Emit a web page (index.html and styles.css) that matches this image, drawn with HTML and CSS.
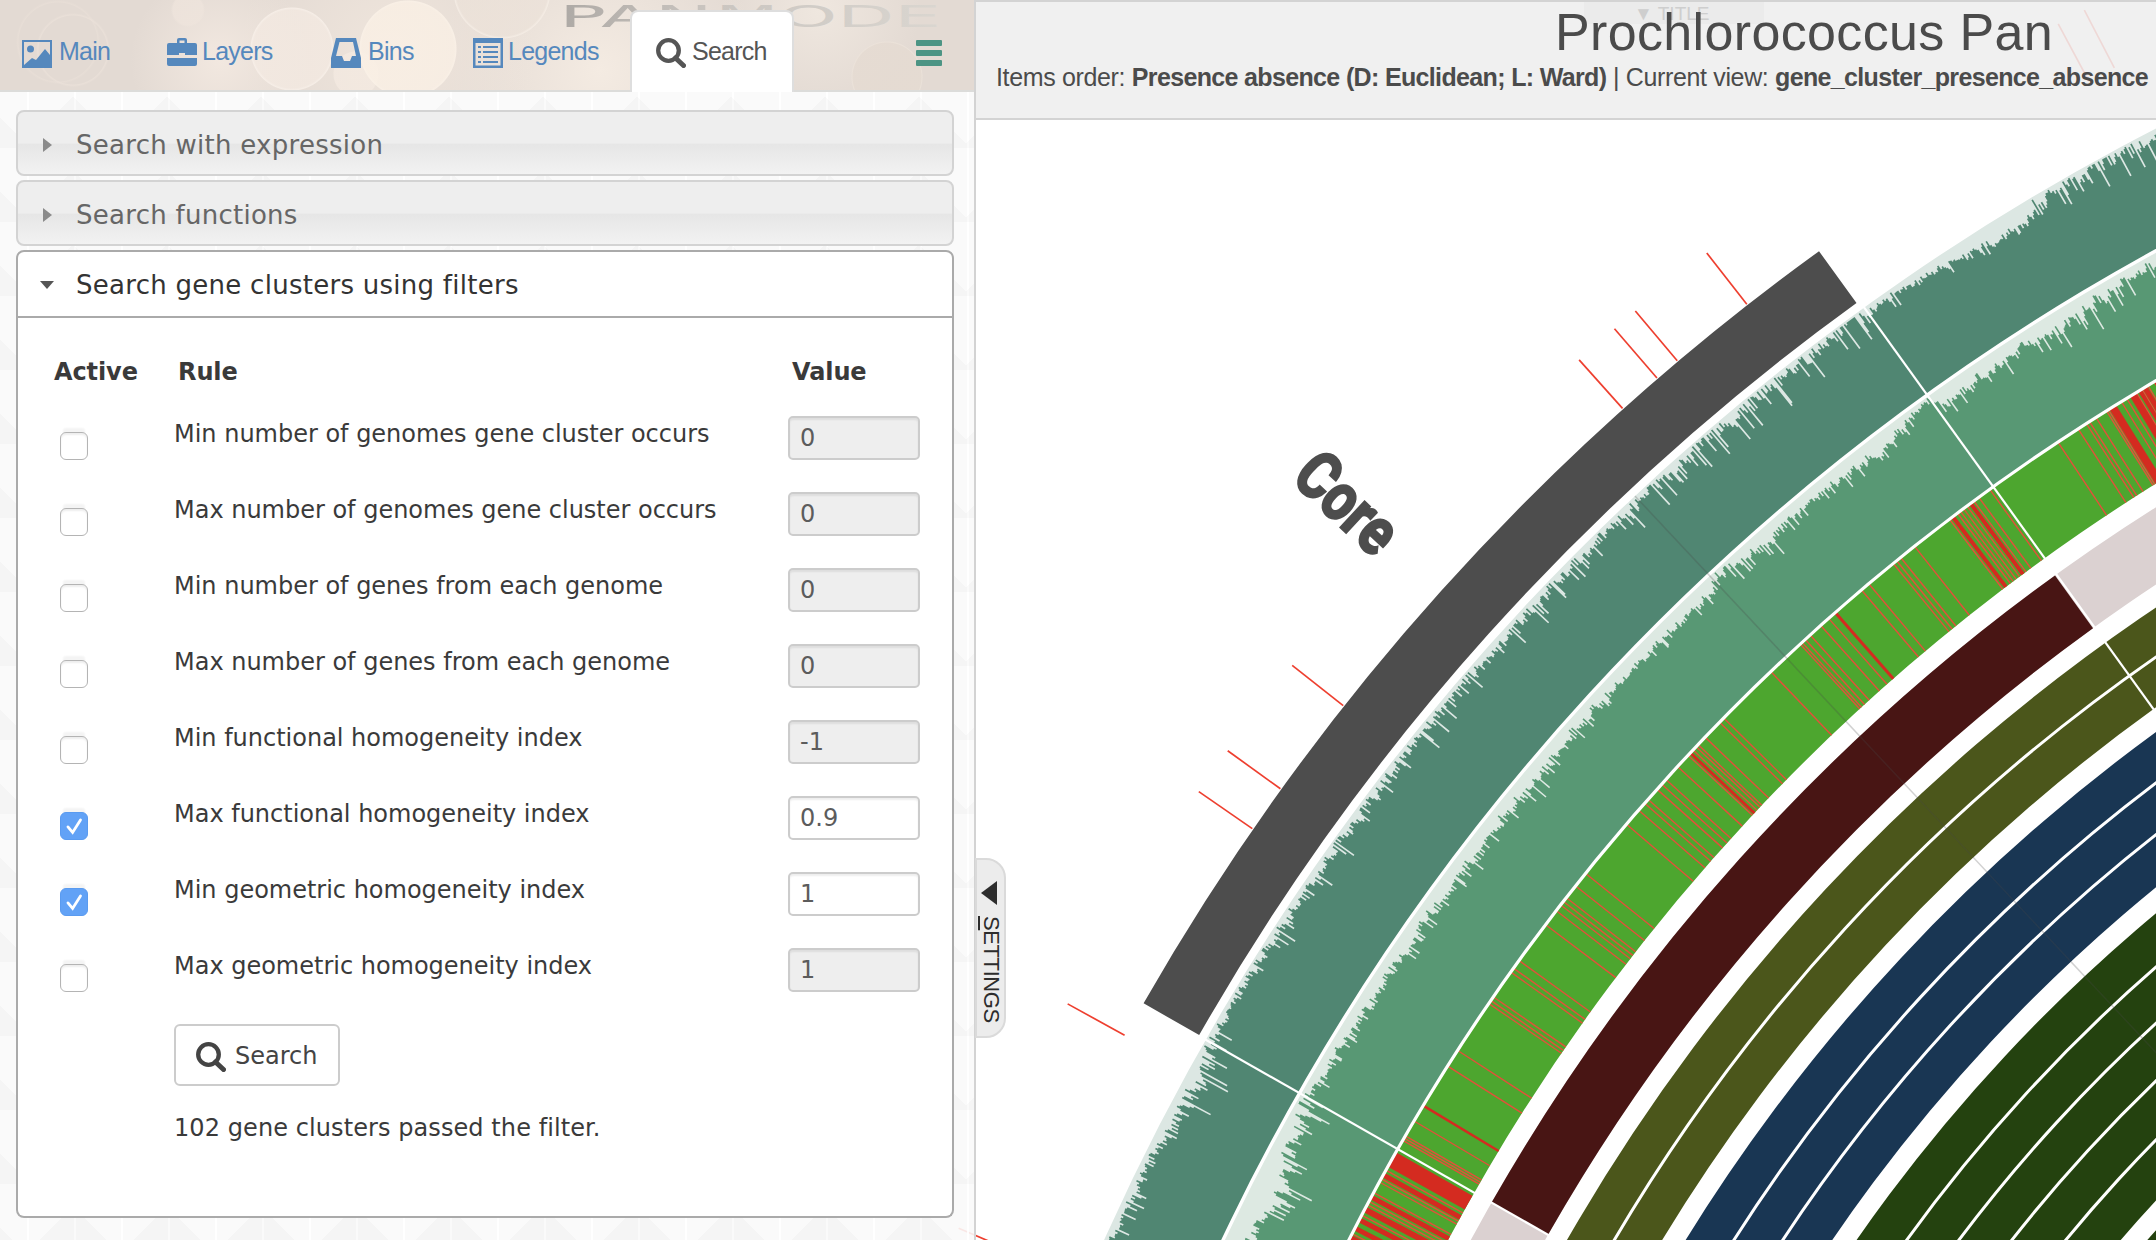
FILE: index.html
```html
<!DOCTYPE html>
<html lang="en">
<head>
<meta charset="utf-8">
<title>Prochlorococcus Pan</title>
<link rel="stylesheet" href="styles.css">
</head>
<body>
<svg id="stage" class="stage" viewBox="0 0 2156 1240" width="2156" height="1240"></svg>

<aside class="panel">
  <nav class="tabs">
    <svg class="mode" width="400" height="36" viewBox="0 0 400 36">
      <defs><linearGradient id="fade" gradientUnits="userSpaceOnUse" x1="0" x2="400" y1="0" y2="0"><stop offset="0" stop-color="#aaa6a2"/><stop offset=".4" stop-color="#c9c4bf"/><stop offset="1" stop-color="#dad6d0"/></linearGradient></defs>
      <text x="16" y="27" textLength="154" lengthAdjust="spacingAndGlyphs" fill="url(#fade)">PAN</text>
      <text x="172" y="27" textLength="226" lengthAdjust="spacingAndGlyphs" fill="url(#fade)">MODE</text>
    </svg>
    <a class="tab tab-main"><svg class="icon" viewBox="0 0 30 30"><path fill-rule="evenodd" d="M0 2h30v28H0zM2 4v23l8-7 4 2 9-11 5 6V4z"/><circle cx="8.500" cy="11" r="3.500"/></svg><span>Main</span></a>
    <a class="tab tab-layers"><svg class="icon" viewBox="0 0 30 30"><path d="M10 5V2q0-2 2-2h6q2 0 2 2v3h8q2 0 2 2v10H18v-2h-6v2H0V7q0-2 2-2zM12.500 5h5V2.500h-5zM0 20h30v6q0 2-2 2H2q-2 0-2-2z" fill-rule="evenodd"/></svg><span>Layers</span></a>
    <a class="tab tab-bins"><svg class="icon" viewBox="0 0 30 30"><path fill-rule="evenodd" d="M5 0h20l5 20v10H0V20zM8.500 4L5 18h6l2 5h6l2-5h4L22 4z"/></svg><span>Bins</span></a>
    <a class="tab tab-legends"><svg class="icon" viewBox="0 0 30 30"><path fill-rule="evenodd" d="M0 0h30v30H0zM2.500 5v22.500h25V5z"/><path d="M5 8h3v2H5zm5 0h15v2H10zM5 13h3v2H5zm5 0h15v2H10zM5 18h3v2H5zm5 0h15v2H10zM5 23h3v2H5zm5 0h15v2H10z"/></svg><span>Legends</span></a>
    <a class="tab tab-search active"><svg class="icon" viewBox="0 0 30 30"><circle cx="12.500" cy="12.500" r="10.300" fill="none" stroke="currentColor" stroke-width="4.300"/><path d="M19.500 20l8 7.500" stroke="currentColor" stroke-width="5" stroke-linecap="round"/></svg><span>Search</span></a>
    <div class="burger"><i></i><i></i><i></i></div>
  </nav>

  <div class="accordion">
    <h3 class="head"><svg class="caret" viewBox="0 0 16 16"><path d="M4 1l9 7-9 7z"/></svg>Search with expression</h3>
    <h3 class="head"><svg class="caret" viewBox="0 0 16 16"><path d="M4 1l9 7-9 7z"/></svg>Search functions</h3>
    <h3 class="head open"><svg class="caret" viewBox="0 0 16 16"><path d="M1 4h14l-7 8z"/></svg>Search gene clusters using filters</h3>
    <section class="content">
      <div class="row titles"><b>Active</b><b>Rule</b><b>Value</b></div>
      <div class="row"><input type="checkbox" class="check"><label>Min number of genomes gene cluster occurs</label><input class="value" value="0" disabled></div>
      <div class="row"><input type="checkbox" class="check"><label>Max number of genomes gene cluster occurs</label><input class="value" value="0" disabled></div>
      <div class="row"><input type="checkbox" class="check"><label>Min number of genes from each genome</label><input class="value" value="0" disabled></div>
      <div class="row"><input type="checkbox" class="check"><label>Max number of genes from each genome</label><input class="value" value="0" disabled></div>
      <div class="row"><input type="checkbox" class="check"><label>Min functional homogeneity index</label><input class="value" value="-1" disabled></div>
      <div class="row"><span class="check on"><svg viewBox="0 0 28 28"><path d="M7.500 15l5 6L21 7.500"/></svg></span><label>Max functional homogeneity index</label><input class="value" value="0.9"></div>
      <div class="row"><span class="check on"><svg viewBox="0 0 28 28"><path d="M7.500 15l5 6L21 7.500"/></svg></span><label>Min geometric homogeneity index</label><input class="value" value="1"></div>
      <div class="row"><input type="checkbox" class="check"><label>Max geometric homogeneity index</label><input class="value" value="1" disabled></div>
      <button class="go"><svg class="icon" viewBox="0 0 30 30"><circle cx="12.500" cy="12.500" r="10.300" fill="none" stroke="currentColor" stroke-width="4.300"/><path d="M19.500 20l8 7.500" stroke="currentColor" stroke-width="5" stroke-linecap="round"/></svg><span>Search</span></button>
      <p class="result">102 gene clusters passed the filter.</p>
    </section>
  </div>
</aside>

<main class="view">
  <header class="title">
    <span class="title-tab">▼ TITLE</span>
    <h1>Prochlorococcus Pan</h1>
    <p><span>Items order: </span><b>Presence absence (D: Euclidean; L: Ward)</b><span> | Current view: </span><b>gene_cluster_presence_absence</b></p>
  </header>
  <div class="settings"><svg width="17" height="24" viewBox="0 0 17 24"><path d="M0 12L16 0v24z" fill="#2d2d2d"/></svg><span><u>S</u>ETTINGS</span></div>
</main>
<script src="chart.js"></script>
</body>
</html>
```
FILE: styles.css
```css
* { box-sizing: border-box; }
body { margin: 0; width: 2156px; height: 1240px; display: flex; overflow: hidden; background: #fff; font-family: "Liberation Sans", Arial, sans-serif; position: relative; }
.stage { position: absolute; left: 0; top: 0; }

.panel {
  position: relative; width: 976px; height: 1240px; border-right: 2px solid #d3d3d3;
  background:
    conic-gradient(from 135deg at 50% 30%, rgba(0,0,0,.018) 90deg, transparent 0) 26px 0 / 94px 74px,
    linear-gradient(90deg, rgba(255,255,255,.9) 2px, transparent 2px) 27px 0 / 47px 100%,
    rgba(250,250,250,.9);
}
.tabs {
  position: relative; height: 92px; display: flex; align-items: flex-end; border-bottom: 2px solid #dcdcda; color: #5588bd;
  background:
    radial-gradient(circle at 292px 49px, rgba(244,234,226,.75) 39px, rgba(248,240,233,.85) 41px, transparent 42px),
    radial-gradient(circle at 408px 49px, rgba(250,240,229,.8) 46px, rgba(250,241,231,.9) 48px, transparent 49px),
    radial-gradient(circle at 188px 10px, rgba(238,228,220,.8) 15px, transparent 17px),
    radial-gradient(circle at 356px 74px, rgba(245,235,226,.7) 22px, transparent 23px),
    radial-gradient(circle at 73px 50px, transparent 34px, rgba(236,226,218,.7) 35px, transparent 37px),
    radial-gradient(circle at 58px 42px, transparent 39px, rgba(234,224,216,.6) 40px, transparent 42px),
    radial-gradient(circle at 502px -10px, rgba(236,226,217,.7) 46px, rgba(246,238,230,.8) 48px, transparent 49px),
    radial-gradient(circle at 887px 77px, rgba(229,219,210,.9) 34px, rgba(236,227,218,.8) 35px, transparent 36px),
    radial-gradient(circle at 220px 60px, #f2e8e0, transparent 90px),
    radial-gradient(circle at 390px 50px, #efe5dc, transparent 150px),
    radial-gradient(circle at 600px 70px, #f4ebe2, transparent 160px),
    radial-gradient(circle at 820px 10px, #efe7df, transparent 100px),
    #e3dad3;
}
.mode { position: absolute; left: 543px; top: 0; font: 30px "DejaVu Sans", sans-serif; }
.tab { display: flex; gap: 7px; height: 80px; padding-top: 28px; font-size: 25px; letter-spacing: -0.75px; white-space: nowrap; position: relative; }
.tab span { line-height: 27px; }
.icon { width: 30px; height: 30px; fill: currentColor; flex: none; }
.tab-main { margin-left: 22px; width: 145px; }
.tab-layers { width: 164px; }
.tab-bins { width: 142px; }
.tab-legends { width: 157px; }
.tab-layers .icon, .tab-legends .icon { margin-right: -2px; }
.tab.active { height: 82px; width: 164px; margin-bottom: -2px; padding-top: 26px; padding-left: 24px; background: #fff; border: 2px solid #dedede; border-bottom: 0; border-radius: 8px 8px 0 0; color: #555; }
.active .icon { margin-right: -1px; }
.burger { margin: 0 0 24px 122px; width: 26px; display: flex; flex-direction: column; gap: 4px; }
.burger i { height: 6px; background: #4c9484; border-radius: 1px; }

.accordion { padding: 18px 20px 0 16px; font-family: "DejaVu Sans", Verdana, sans-serif; color: #3a3a3a; }
.head { margin: 0 0 4px; height: 66px; padding: 3px 0 0 21px; display: flex; align-items: center; gap: 21px; font-size: 26px; font-weight: 400; letter-spacing: 0.27px; color: #666; border: 2px solid #d3d3d3; border-radius: 8px; background: linear-gradient(#eee 0 50%, #e6e6e6 52%, #f2f2f2); }
.head .caret { width: 16px; height: 16px; fill: #8b8b8b; }
.head.open { height: 68px; margin: 0; padding-top: 2px; background: #fff; border-color: #aaa; border-radius: 8px 8px 0 0; color: #333; }
.head.open .caret { fill: #555; }
.content { height: 900px; background: #fff; border: 2px solid #aaa; border-top: 0; border-radius: 0 0 8px 8px; padding: 36px 0 0 36px; font-size: 24px; }
.row { display: grid; grid-template-columns: 120px 614px 133px; height: 76px; align-items: start; letter-spacing: -0.01px; }
.row.titles { height: 62px; line-height: 36px; letter-spacing: -0.1px; }
.row.titles b:nth-child(2) { padding-left: 4px; }
.row.titles b:nth-child(3) { padding-left: 4px; }
.row label { line-height: 36px; }
.check { appearance: none; width: 28px; height: 28px; margin: 16px 0 0 6px; background: #fff; border: 1.500px solid #b4b4b4; border-radius: 6px; box-shadow: inset 0 2px 2px #eee, 0 -7px 2px -3px #f4f4f4; }
.check.on { display: block; background: #62a2f6; border-color: #5a9bf0; box-shadow: 0 -7px 2px -3px #f4f4f4; }
.check svg { display: block; width: 26px; height: 26px; fill: none; stroke: #fff; stroke-width: 3; stroke-linecap: round; }
.value { width: 132px; height: 44px; border: 2px solid #ccc; border-radius: 5px; padding: 0 10px; font: 24px "DejaVu Sans", Verdana, sans-serif; color: #5c5c5c; background: #fff; box-shadow: inset 0 2px 2px rgba(0,0,0,.07); }
.value:disabled { background: #eee; }
.go { display: flex; align-items: center; gap: 9px; width: 166px; height: 62px; margin: 0 0 0 120px; padding: 0 0 0 20px; border: 2px solid #ccc; border-radius: 6px; background: #fff; font: 24px "DejaVu Sans", Verdana, sans-serif; color: #444; }
.go .icon { margin-top: 3px; }
.go span { margin-top: 2px; }
.result { margin: 24px 0 0 120px; line-height: 36px; letter-spacing: 0.08px; }

.view { position: relative; flex: 1; }
.title { position: relative; height: 120px; background: rgba(238,238,238,.88); border-top: 2px solid #d3d3d3; border-bottom: 2px solid #d3d3d3; color: #4b4b4b; white-space: nowrap; overflow: hidden; }
.title h1 { position: relative; margin: 2px 0 0 579px; font-size: 52px; font-weight: 400; line-height: 56px; letter-spacing: 0.35px; }
.title p { margin: 2px 0 0 20px; font-size: 25px; line-height: 30px; letter-spacing: -0.35px; white-space: pre; }
.title p b { letter-spacing: -0.65px; }
.title-tab { position: absolute; left: 608px; top: -2px; width: 180px; height: 24px; padding: 3px 0 0 50px; font-size: 19px; color: #cecece; background: rgba(225,225,225,.3); }
.settings { position: absolute; left: -1px; top: 858px; width: 31px; height: 180px; border: 2px solid #dadada; border-radius: 0 20px 20px 0; background: #ececec; padding: 21px 0 0 4px; color: #2d2d2d; }
.settings svg { display: block; }
.settings span { display: block; writing-mode: vertical-rl; font-size: 22px; line-height: 22px; margin: 11px 0 0 -1px; letter-spacing: -0.4px; }
.settings u { text-underline-position: left; }
```
FILE: chart.js
```js
// Circular pangenome display: layers are annular sectors around a shared centre.
const NS = 'http://www.w3.org/2000/svg';
const stage = document.getElementById('stage');
const CX = 3217, CY = 2186;
const CORE_START = 29.68, CORE_END = 54.24;

function point(r, deg) {
  const a = deg * Math.PI / 180;
  return (CX - r * Math.cos(a)).toFixed(2) + ' ' + (CY - r * Math.sin(a)).toFixed(2);
}
function add(name, attrs) {
  const el = document.createElementNS(NS, name);
  for (const key in attrs) el.setAttribute(key, attrs[key]);
  stage.appendChild(el);
  return el;
}
function sector(inner, outer, from, to, fill) {
  add('path', { fill, d: `M${point(outer, from)}A${outer} ${outer} 0 0 1 ${point(outer, to)}L${point(inner, to)}A${inner} ${inner} 0 0 0 ${point(inner, from)}Z` });
}
function ring(r, width) {
  add('path', { fill: 'none', stroke: '#fff', 'stroke-width': width, d: `M${point(r, 10)}A${r} ${r} 0 0 1 ${point(r, 75)}` });
}
function spoke(outer, inner, deg, stroke, width) {
  add('path', { stroke, 'stroke-width': width, d: `M${point(outer, deg)}L${point(inner, deg)}` });
}

let seed = 90217;
function rnd() {
  seed = (seed * 48271) % 2147483647;
  return seed / 2147483647;
}
function envelope(table, a) {
  for (let i = 1; i < table.length; i++) {
    if (a <= table[i][0]) {
      const [a0, v0, s0] = table[i - 1], [a1, v1, s1] = table[i];
      const t = (a - a0) / (a1 - a0);
      return [v0 + (v1 - v0) * t, s0 + (s1 - s0) * t];
    }
  }
  return table[table.length - 1].slice(1);
}
// Bars grow outwards from the inner radius; table rows are [angle, shortfall, spike].
function bars(inner, outer, table, pale, fill) {
  sector(inner, outer, 18, 68, pale);
  let d = `M${point(inner, 18)}`, drift = 0;
  const step = 0.042;
  for (let a = 18; a < 68; a += step) {
    const [base, spike] = envelope(table, a);
    drift = drift * 0.6 + (rnd() - 0.5) * base * 0.35;
    let depth = base + drift + (rnd() - 0.5) * spike * 0.5;
    if (rnd() < 0.2) depth += rnd() * spike;
    const r = outer - Math.max(2, depth);
    d += `L${point(r, a)}L${point(r, a + step)}`;
  }
  add('path', { fill, d: d + `L${point(inner, 68)}A${inner} ${inner} 0 0 0 ${point(inner, 18)}Z` });
}

bars(2207, 2315, [[18, 8, 14], [25, 8, 16], [26.6, 9, 18], [27.6, 14, 28], [29.2, 15, 30], [29.7, 5, 34], [30.2, 5, 16], [34, 7, 20], [42, 7, 20], [46, 7, 22], [50, 7, 28], [53, 6, 28], [54.1, 2, 26], [54.3, 7, 24], [55.5, 8, 8], [57.5, 15, 14], [58.8, 22, 14], [59.2, 5, 24], [62, 8, 34], [68, 8, 34]], '#dce7e3', '#508672');
bars(2094, 2207, [[18, 20, 20], [26, 24, 22], [27.3, 36, 28], [28.2, 18, 30], [29.6, 12, 34], [29.9, 11, 10], [33, 15, 15], [40, 15, 15], [46.6, 15, 10], [47, 8, 18], [48.5, 15, 16], [50.5, 12, 12], [52.3, 18, 14], [53.4, 8, 8], [54.2, 5, 6], [54.4, 16, 12], [57, 16, 14], [58.6, 20, 24], [60, 11, 16], [68, 14, 16]], '#dde9e2', '#589874');

// Single-copy track: green with red marks as [angle, width].
sector(2006, 2094, 18, 68, '#4da62f');
sector(2006, 2094, 29.13, 29.58, '#d42b20');
const thin = [20, 21, 22, 23, 24, 25.1, 25.6, 26.1, 26.35, 26.7, 27.05, 27.62, 27.95, 28.05, 28.32, 28.65, 28.75, 29.02, 29.96, 30.03, 30.10, 30.57, 32.33, 32.84, 34.38, 34.48, 34.60, 35.43, 35.56, 35.82, 37.04, 37.52, 37.72, 37.84, 37.97, 38.38, 38.82, 40.57, 41.08, 41.33, 41.47, 41.84, 42.03, 42.20, 42.68, 43.10, 43.30, 43.42, 43.50, 43.78, 44.35, 44.51, 46.32, 47.42, 47.49, 47.61, 47.79, 48.18, 48.47, 49.66, 49.92, 50.79, 50.91, 51.05, 51.54, 52.75, 53.02, 53.12, 53.23, 53.35, 53.58, 53.75, 54.12, 56.39, 57.05, 57.32, 57.42, 57.63, 57.97, 58.03, 58.45, 58.62, 58.93, 59.11, 59.3, 59.5, 59.7];
const thick = [[26.2, 6], [26.9, 8], [27.22, 5], [27.48, 5], [27.80, 6], [28.18, 5], [28.87, 5], [31.06, 2.5], [43.19, 3], [48.71, 3], [52.86, 4], [53.47, 4], [58.17, 8], [58.82, 7], [59.04, 4], [59.2, 5], [59.6, 8]];
thin.forEach(a => spoke(2093, 2006, a, '#e4503a', 1.4));
thick.forEach(([a, w]) => spoke(2093, 2006, a, '#d42b20', w));

sector(1921, 1986, 18, 68, '#dbd1d1');
sector(1921, 1986, CORE_START, CORE_END - 0.05, '#481514');
sector(1820, 1902, 18, 68, '#4b561b');
sector(1677, 1800, 18, 68, '#193653');
sector(1448, 1657, 18, 68, '#24420f');
sector(1300, 1428, 18, 68, '#24420f');
ring(2207, 3.4);
ring(2094, 3.2);
[1861, 1759, 1718, 1616, 1574, 1532, 1490].forEach(r => ring(r, 3));
spoke(2317, 1800, CORE_END, '#fff', 2.2);
spoke(2317, 1900, CORE_START, '#fff', 2.2);
spoke(2315, 1400, 46.89, 'rgba(70,70,70,.25)', 1.5);

// The selected bin and its label.
sector(2323, 2387, 29.7, 54.15, '#4d4d4d');
const label = add('text', { transform: 'translate(1290 480) rotate(43)', fill: '#4d4d4d', stroke: '#4d4d4d', 'stroke-width': 2.6, 'font-family': 'Roboto, sans-serif', 'font-weight': 700, 'font-size': 66, textLength: 115, lengthAdjust: 'spacingAndGlyphs' });
label.textContent = 'Core';

// Search hits.
[22.98, 28.81, 34.64, 35.81, 38.31, 48.11, 49.21, 49.85, 52.0, 61.81, 62.5].forEach(a => spoke(2453, 2388, a, '#ee3f2f', 1.7));
```
